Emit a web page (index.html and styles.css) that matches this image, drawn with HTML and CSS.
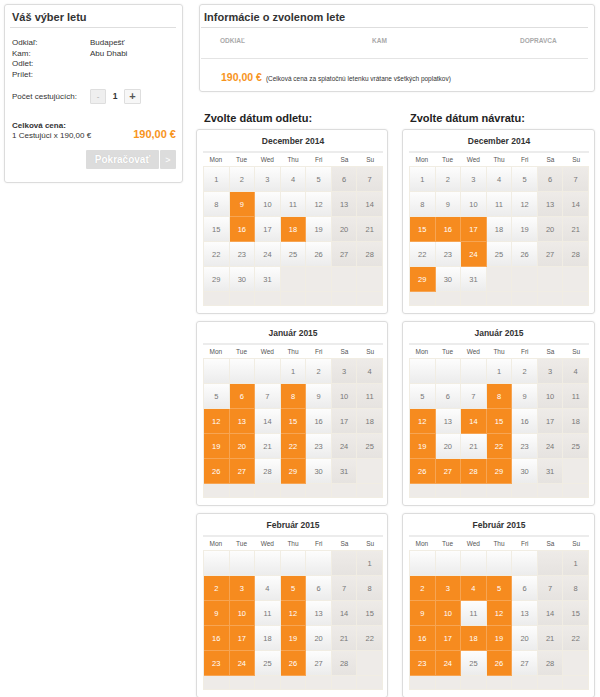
FILE: index.html
```html
<!DOCTYPE html>
<html lang="sk">
<head>
<meta charset="utf-8">
<title>Výber letu</title>
<link rel="stylesheet" href="styles.css">
</head>
<body>
<div class="page">
  <aside class="summary">
    <h2 class="panel-title">Váš výber letu</h2>
    <div class="route">
      <div class="row"><span class="lbl">Odkiaľ:</span><span class="val">Budapešť</span></div>
      <div class="row"><span class="lbl">Kam:</span><span class="val">Abu Dhabi</span></div>
      <div class="row"><span class="lbl">Odlet:</span><span class="val"></span></div>
      <div class="row"><span class="lbl">Prílet:</span><span class="val"></span></div>
    </div>
    <div class="pax">
      <span class="pax-label">Počet cestujúcích:</span>
      <span class="qty minus">-</span><span class="qty-val">1</span><span class="qty plus">+</span>
    </div>
    <div class="total">
      <div class="total-left"><strong>Celková cena:</strong><span>1 Cestujúci x 190,00 €</span></div>
      <div class="total-price">190,00 €</div>
    </div>
    <div class="actions"><span class="btn-go">Pokračovať</span><span class="btn-arrow">&gt;</span></div>
  </aside>

  <main class="main">
    <section class="info">
      <h2 class="info-title">Informácie o zvolenom lete</h2>
      <div class="info-cols"><span>ODKIAĽ</span><span>KAM</span><span>DOPRAVCA</span></div>
      <div class="info-price"><strong>190,00 €</strong><small>(Celková cena za spiatočnú letenku vrátane všetkých poplatkov)</small></div>
    </section>

    <div class="cals">
      <div class="col">
        <h3 class="col-title">Zvolte dátum odletu:</h3>

        <div class="cal">
          <div class="cal-head">December 2014</div>
          <div class="dn"><span>Mon</span><span>Tue</span><span>Wed</span><span>Thu</span><span>Fri</span><span>Sa</span><span>Su</span></div>
          <div class="grid">
            <span class="d">1</span><span class="d">2</span><span class="d">3</span><span class="d">4</span><span class="d">5</span><span class="w">6</span><span class="w">7</span>
            <span class="d">8</span><span class="s">9</span><span class="d">10</span><span class="d">11</span><span class="d">12</span><span class="w">13</span><span class="w">14</span>
            <span class="d">15</span><span class="s">16</span><span class="d">17</span><span class="s">18</span><span class="d">19</span><span class="w">20</span><span class="w">21</span>
            <span class="d">22</span><span class="d">23</span><span class="d">24</span><span class="d">25</span><span class="d">26</span><span class="w">27</span><span class="w">28</span>
            <span class="d">29</span><span class="d">30</span><span class="d">31</span><span class="x"></span><span class="x"></span><span class="x"></span><span class="x"></span>
            <span class="x"></span><span class="x"></span><span class="x"></span><span class="x"></span><span class="x"></span><span class="x"></span><span class="x"></span>
          </div>
        </div>

        <div class="cal">
          <div class="cal-head">Január 2015</div>
          <div class="dn"><span>Mon</span><span>Tue</span><span>Wed</span><span>Thu</span><span>Fri</span><span>Sa</span><span>Su</span></div>
          <div class="grid">
            <span class="d"></span><span class="d"></span><span class="d"></span><span class="d">1</span><span class="d">2</span><span class="w">3</span><span class="w">4</span>
            <span class="d">5</span><span class="s">6</span><span class="d">7</span><span class="s">8</span><span class="d">9</span><span class="w">10</span><span class="w">11</span>
            <span class="s">12</span><span class="s">13</span><span class="d">14</span><span class="s">15</span><span class="d">16</span><span class="w">17</span><span class="w">18</span>
            <span class="s">19</span><span class="s">20</span><span class="d">21</span><span class="s">22</span><span class="d">23</span><span class="w">24</span><span class="w">25</span>
            <span class="s">26</span><span class="s">27</span><span class="d">28</span><span class="s">29</span><span class="d">30</span><span class="w">31</span><span class="x"></span>
            <span class="x"></span><span class="x"></span><span class="x"></span><span class="x"></span><span class="x"></span><span class="x"></span><span class="x"></span>
          </div>
        </div>

        <div class="cal">
          <div class="cal-head">Február 2015</div>
          <div class="dn"><span>Mon</span><span>Tue</span><span>Wed</span><span>Thu</span><span>Fri</span><span>Sa</span><span>Su</span></div>
          <div class="grid">
            <span class="d"></span><span class="d"></span><span class="d"></span><span class="d"></span><span class="d"></span><span class="w"></span><span class="w">1</span>
            <span class="s">2</span><span class="s">3</span><span class="d">4</span><span class="s">5</span><span class="d">6</span><span class="w">7</span><span class="w">8</span>
            <span class="s">9</span><span class="s">10</span><span class="d">11</span><span class="s">12</span><span class="d">13</span><span class="w">14</span><span class="w">15</span>
            <span class="s">16</span><span class="s">17</span><span class="d">18</span><span class="s">19</span><span class="d">20</span><span class="w">21</span><span class="w">22</span>
            <span class="s">23</span><span class="s">24</span><span class="d">25</span><span class="s">26</span><span class="d">27</span><span class="w">28</span><span class="x"></span>
            <span class="x"></span><span class="x"></span><span class="x"></span><span class="x"></span><span class="x"></span><span class="x"></span><span class="x"></span>
          </div>
        </div>
      </div>

      <div class="col">
        <h3 class="col-title">Zvolte dátum návratu:</h3>

        <div class="cal">
          <div class="cal-head">December 2014</div>
          <div class="dn"><span>Mon</span><span>Tue</span><span>Wed</span><span>Thu</span><span>Fri</span><span>Sa</span><span>Su</span></div>
          <div class="grid">
            <span class="d">1</span><span class="d">2</span><span class="d">3</span><span class="d">4</span><span class="d">5</span><span class="w">6</span><span class="w">7</span>
            <span class="d">8</span><span class="d">9</span><span class="d">10</span><span class="d">11</span><span class="d">12</span><span class="w">13</span><span class="w">14</span>
            <span class="s">15</span><span class="s">16</span><span class="s">17</span><span class="d">18</span><span class="d">19</span><span class="w">20</span><span class="w">21</span>
            <span class="d">22</span><span class="d">23</span><span class="s">24</span><span class="d">25</span><span class="d">26</span><span class="w">27</span><span class="w">28</span>
            <span class="s">29</span><span class="d">30</span><span class="d">31</span><span class="x"></span><span class="x"></span><span class="x"></span><span class="x"></span>
            <span class="x"></span><span class="x"></span><span class="x"></span><span class="x"></span><span class="x"></span><span class="x"></span><span class="x"></span>
          </div>
        </div>

        <div class="cal">
          <div class="cal-head">Január 2015</div>
          <div class="dn"><span>Mon</span><span>Tue</span><span>Wed</span><span>Thu</span><span>Fri</span><span>Sa</span><span>Su</span></div>
          <div class="grid">
            <span class="d"></span><span class="d"></span><span class="d"></span><span class="d">1</span><span class="d">2</span><span class="w">3</span><span class="w">4</span>
            <span class="d">5</span><span class="d">6</span><span class="d">7</span><span class="s">8</span><span class="d">9</span><span class="w">10</span><span class="w">11</span>
            <span class="s">12</span><span class="d">13</span><span class="s">14</span><span class="s">15</span><span class="d">16</span><span class="w">17</span><span class="w">18</span>
            <span class="s">19</span><span class="d">20</span><span class="d">21</span><span class="s">22</span><span class="d">23</span><span class="w">24</span><span class="w">25</span>
            <span class="s">26</span><span class="s">27</span><span class="s">28</span><span class="s">29</span><span class="d">30</span><span class="w">31</span><span class="x"></span>
            <span class="x"></span><span class="x"></span><span class="x"></span><span class="x"></span><span class="x"></span><span class="x"></span><span class="x"></span>
          </div>
        </div>

        <div class="cal">
          <div class="cal-head">Február 2015</div>
          <div class="dn"><span>Mon</span><span>Tue</span><span>Wed</span><span>Thu</span><span>Fri</span><span>Sa</span><span>Su</span></div>
          <div class="grid">
            <span class="d"></span><span class="d"></span><span class="d"></span><span class="d"></span><span class="d"></span><span class="w"></span><span class="w">1</span>
            <span class="s">2</span><span class="s">3</span><span class="s">4</span><span class="s">5</span><span class="d">6</span><span class="w">7</span><span class="w">8</span>
            <span class="s">9</span><span class="s">10</span><span class="d">11</span><span class="s">12</span><span class="d">13</span><span class="w">14</span><span class="w">15</span>
            <span class="s">16</span><span class="s">17</span><span class="s">18</span><span class="s">19</span><span class="d">20</span><span class="w">21</span><span class="w">22</span>
            <span class="s">23</span><span class="s">24</span><span class="d">25</span><span class="s">26</span><span class="d">27</span><span class="w">28</span><span class="x"></span>
            <span class="x"></span><span class="x"></span><span class="x"></span><span class="x"></span><span class="x"></span><span class="x"></span><span class="x"></span>
          </div>
        </div>
      </div>
    </div>
  </main>
</div>
</body>
</html>
```

FILE: styles.css
```css
html, body {
  margin: 0;
  padding: 0;
  overflow: hidden;
  background: #fff;
}
body {
  font-family: "Liberation Sans", Arial, sans-serif;
  color: #333;
}
.page {
  display: flex;
  align-items: flex-start;
  padding: 4px 0 0 4px;
}

/* ---------- left summary panel ---------- */
.summary {
  box-sizing: border-box;
  width: 179px;
  height: 179px;
  border: 1px solid #dcdcdc;
  border-radius: 3px;
  box-shadow: 0 0 2px rgba(0,0,0,0.08);
  padding: 5px 6px 0 5px;
  font-size: 8px;
}
.panel-title {
  margin: 0;
  font-size: 11px;
  line-height: 14px;
  font-weight: bold;
  color: #333;
  padding: 0 0 3px 2px;
  border-bottom: 1px solid #dedede;
}
.route {
  margin-top: 10px;
  padding-left: 2px;
}
.row {
  display: flex;
  line-height: 10.5px;
  height: 10.5px;
}
.lbl { width: 78px; }
.pax {
  display: flex;
  align-items: center;
  margin-top: 8px;
  padding-left: 2px;
  height: 16px;
}
.pax-label { width: 78px; }
.qty {
  box-sizing: border-box;
  display: flex;
  align-items: center;
  justify-content: center;
  height: 15px;
  border: 1px solid #dedede;
  border-radius: 1px;
}
.minus {
  width: 16px;
  background: #efefef;
  color: #aaa;
}
.plus {
  width: 17px;
  background: #f7f7f7;
  color: #555;
  font-weight: bold;
  font-size: 11px;
}
.qty-val {
  width: 18px;
  text-align: center;
  font-weight: bold;
  font-size: 8.5px;
}
.total {
  display: flex;
  justify-content: space-between;
  align-items: flex-end;
  margin-top: 17px;
  padding-left: 2px;
}
.total-left {
  display: flex;
  flex-direction: column;
  line-height: 9.5px;
}
.total-price {
  color: #f7941d;
  font-weight: bold;
  font-size: 11px;
  line-height: 11px;
}
.actions {
  display: flex;
  justify-content: flex-end;
  gap: 1px;
  margin-top: 10px;
}
.btn-go, .btn-arrow {
  display: flex;
  align-items: center;
  justify-content: center;
  height: 19px;
  background: #dcdcdc;
  color: #fff;
  border-radius: 1px;
}
.btn-go {
  width: 73px;
  font-size: 10px;
  font-weight: bold;
  text-shadow: 0 0 1px rgba(0,0,0,0.15);
}
.btn-arrow {
  width: 16px;
  font-size: 9px;
}

/* ---------- main column ---------- */
.main {
  margin-left: 13px;
  width: 399px;
}
.info {
  box-sizing: border-box;
  margin-left: 3px;
  width: 396px;
  height: 88px;
  border: 1px solid #dcdcdc;
  border-radius: 3px;
  box-shadow: 0 0 2px rgba(0,0,0,0.08);
  padding: 5px 6px 0 1px;
}
.info-title {
  margin: 0;
  font-size: 11px;
  line-height: 14px;
  font-weight: bold;
  color: #333;
  padding: 0 0 3px 3px;
  border-bottom: 1px solid #dedede;
}
.info-cols {
  display: grid;
  grid-template-columns: 152px 148px auto;
  padding: 9px 0 13px 19px;
  font-size: 6.5px;
  line-height: 8px;
  font-weight: bold;
  color: #aaa;
  border-bottom: 1px solid #e4e4e4;
}
.info-price {
  display: flex;
  align-items: baseline;
  gap: 4px;
  padding: 12px 0 0 20px;
}
.info-price strong {
  color: #f7941d;
  font-size: 10.5px;
  line-height: 12px;
}
.info-price small {
  font-size: 6.5px;
  color: #333;
}

/* ---------- calendars ---------- */
.cals {
  display: grid;
  grid-template-columns: 192px 193px;
  column-gap: 14px;
  margin-top: 18px;
}
.col-title {
  margin: 0 0 3px;
  padding-left: 8px;
  font-size: 11px;
  line-height: 16px;
  font-weight: bold;
  color: #222;
}
.cal {
  box-sizing: border-box;
  height: 185px;
  margin-bottom: 7px;
  border: 1px solid #dcdcdc;
  border-radius: 3px;
  box-shadow: 0 0 2px rgba(0,0,0,0.08);
  padding: 0 0 7px 6px;
}
.cal-head {
  width: 180px;
  box-sizing: border-box;
  padding: 5px 0 4px;
  text-align: center;
  font-size: 8.5px;
  line-height: 12px;
  font-weight: bold;
  color: #333;
  border-bottom: 2px solid #ececec;
}
.dn {
  display: grid;
  grid-template-columns: repeat(7, 1fr);
  width: 180px;
  height: 13px;
  align-items: center;
  text-align: center;
  font-size: 6.5px;
  color: #555;
}
.grid {
  display: grid;
  grid-template-columns: repeat(7, 1fr);
  grid-template-rows: repeat(5, 25px) 14px;
  width: 180px;
  box-sizing: border-box;
  border-top: 1px solid #f1ede3;
  border-left: 1px solid #f1ede3;
}
.grid span {
  box-sizing: border-box;
  display: flex;
  align-items: center;
  justify-content: center;
  border-right: 1px solid #f1ede3;
  border-bottom: 1px solid #f1ede3;
  font-size: 7.5px;
  color: #777;
}
.grid .d {
  background: linear-gradient(#fdfdfd, #ececec);
}
.grid .w {
  background: linear-gradient(#eeebe8, #e6e3e0);
}
.grid .x {
  background: #eeebe8;
}
.grid .s {
  background: #f68b1f;
  color: #fff;
  border-color: #f7a553;
}
```
